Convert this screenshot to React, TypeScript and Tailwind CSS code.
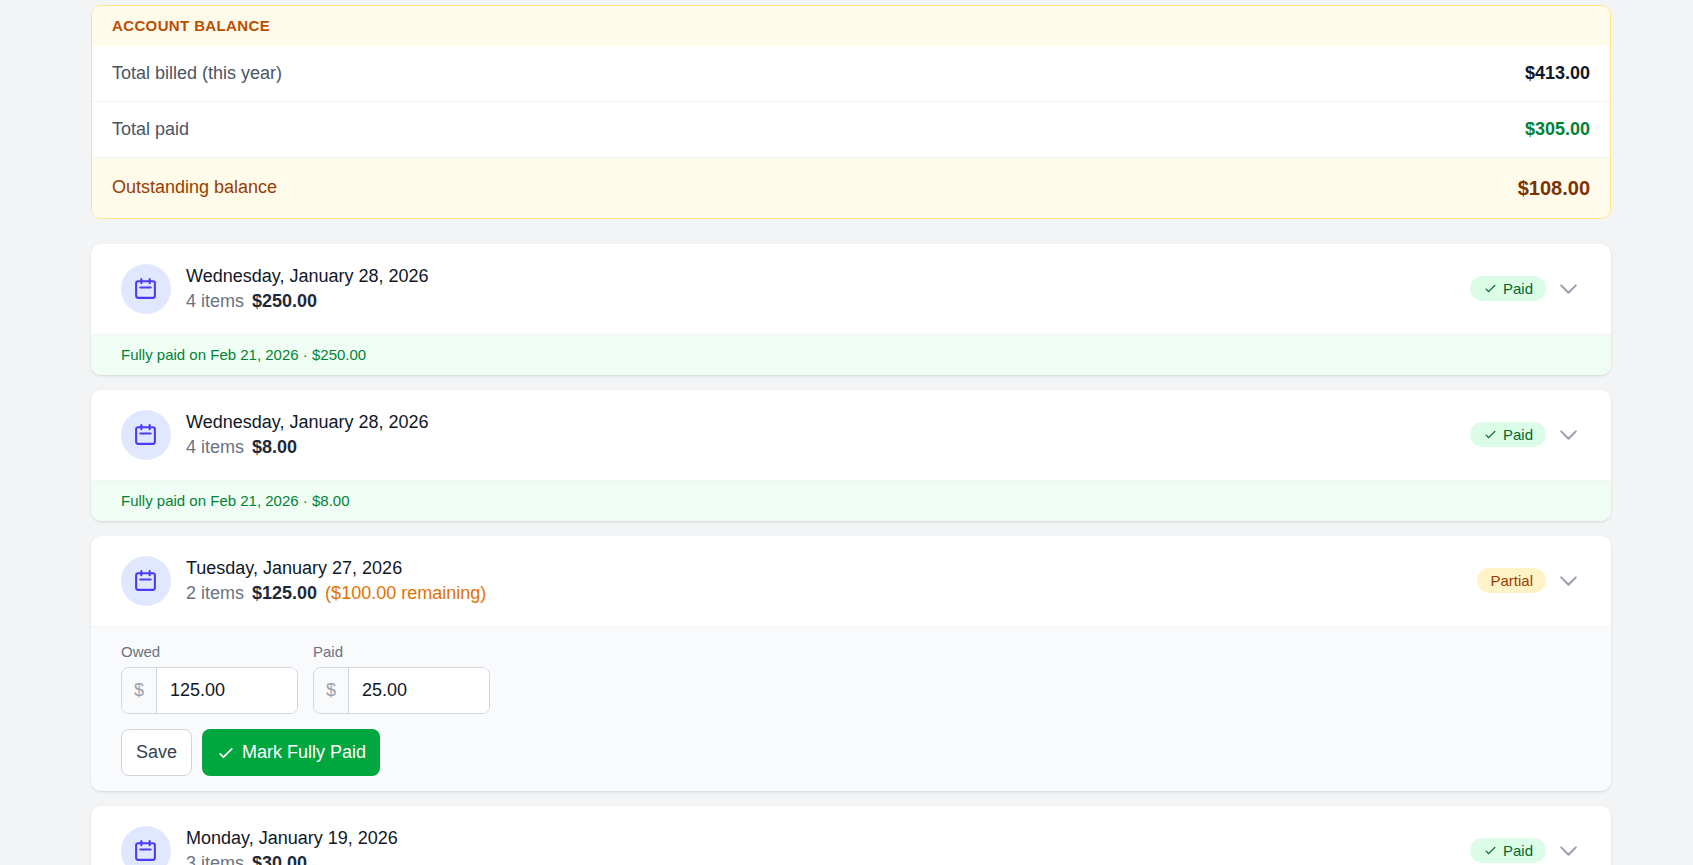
import { useState } from "react";

type Visit = {
  id: string;
  date: string;
  items: number;
  amount: string;
  status: "paid" | "partial";
  remaining?: string;
  paidOn?: string;
  paid?: string;
};

const visits: Visit[] = [
  { id: "v1", date: "Wednesday, January 28, 2026", items: 4, amount: "250.00", status: "paid", paidOn: "Feb 21, 2026" },
  { id: "v2", date: "Wednesday, January 28, 2026", items: 4, amount: "8.00", status: "paid", paidOn: "Feb 21, 2026" },
  { id: "v3", date: "Tuesday, January 27, 2026", items: 2, amount: "125.00", status: "partial", remaining: "100.00", paid: "25.00" },
  { id: "v4", date: "Monday, January 19, 2026", items: 3, amount: "30.00", status: "paid", paidOn: "Feb 21, 2026" },
];

function Icon({ d, className }: { d: string; className: string }) {
  return (
    <svg
      className={className}
      viewBox="0 0 24 24"
      fill="none"
      stroke="currentColor"
      strokeWidth="2"
      strokeLinecap="round"
      strokeLinejoin="round"
      aria-hidden="true"
    >
      <path d={d} />
    </svg>
  );
}

const CHECK = "M5 13l4 4L19 7";
const CHEVRON = "M19 9l-7 7-7-7";
const CALENDAR =
  "M8 7V3m8 4V3m-9 8h10M5 21h14a2 2 0 002-2V7a2 2 0 00-2-2H5a2 2 0 00-2 2v12a2 2 0 002 2z";

function Balance() {
  return (
    <section className="overflow-hidden rounded-[10px] border border-amber-200 bg-white">
      <h2 className="bg-amber-50 px-5 py-[10px] text-[15px] leading-5 font-semibold tracking-wide text-amber-700 uppercase">
        Account balance
      </h2>
      <dl>
        <div className="flex items-center justify-between border-b border-gray-100 px-5 py-[15px]">
          <dt className="text-gray-600">Total billed (this year)</dt>
          <dd className="font-semibold text-gray-900">$413.00</dd>
        </div>
        <div className="flex items-center justify-between border-b border-gray-100 px-5 py-[15px]">
          <dt className="text-gray-600">Total paid</dt>
          <dd className="font-semibold text-green-700">$305.00</dd>
        </div>
        <div className="flex items-start justify-between bg-amber-50 px-5 py-[15px]">
          <dt className="pt-[2px] font-medium text-amber-800">Outstanding balance</dt>
          <dd className="text-[20px] leading-[30px] font-bold text-amber-900">$108.00</dd>
        </div>
      </dl>
    </section>
  );
}

function MoneyField({ id, label, value }: { id: string; label: string; value: string }) {
  return (
    <div>
      <label htmlFor={id} className="mb-[5px] block text-[15px] leading-5 text-gray-500">
        {label}
      </label>
      <div className="flex h-[47px] overflow-hidden rounded-lg border border-gray-300 bg-white">
        <span className="flex items-center border-r border-gray-300 bg-gray-50 px-3 text-gray-400">$</span>
        <input
          id={id}
          defaultValue={value}
          inputMode="decimal"
          className="w-[140px] bg-white px-[13px] text-gray-900 outline-none"
        />
      </div>
    </div>
  );
}

function VisitCard({ visit }: { visit: Visit }) {
  const [open, setOpen] = useState(false);
  return (
    <article className="overflow-hidden rounded-[10px] bg-white shadow-sm">
      <button
        type="button"
        aria-expanded={open}
        onClick={() => setOpen(!open)}
        className="flex w-full items-start justify-between px-[30px] py-5 text-left"
      >
        <span className="flex items-center gap-[15px]">
          <span className="block size-[50px] rounded-full bg-indigo-100 p-3 text-indigo-600">
            <Icon d={CALENDAR} className="size-[25px]" />
          </span>
          <span className="block">
            <span className="block font-medium text-gray-900">{visit.date}</span>
            <span className="flex gap-2 text-gray-500">
              <span>{visit.items} items</span>
              <span className="font-semibold text-gray-800">${visit.amount}</span>
              {visit.remaining && <span className="text-amber-600">(${visit.remaining} remaining)</span>}
            </span>
          </span>
        </span>
        <span className="flex items-center gap-[10px] pt-3">
          {visit.status === "paid" ? (
            <span className="flex h-[25px] items-center gap-[5px] rounded-full bg-green-100 px-[13px] text-[15px] leading-5 font-medium text-green-800">
              <Icon d={CHECK} className="size-[15px]" />
              Paid
            </span>
          ) : (
            <span className="flex h-[25px] items-center rounded-full bg-amber-100 px-[13px] text-[15px] leading-5 font-medium text-amber-800">
              Partial
            </span>
          )}
          <Icon d={CHEVRON} className="size-[25px] text-gray-400" />
        </span>
      </button>

      {visit.status === "paid" ? (
        <p className="border-t border-gray-100 bg-green-50 px-[30px] py-[10px] text-[15px] leading-5 text-green-700">
          Fully paid on {visit.paidOn} · ${visit.amount}
        </p>
      ) : (
        <form
          onSubmit={(e) => e.preventDefault()}
          className="flex flex-col gap-[15px] border-t border-gray-100 bg-gray-50 px-[30px] py-[15px]"
        >
          <div className="flex flex-wrap gap-[15px]">
            <MoneyField id={`${visit.id}-owed`} label="Owed" value={visit.amount} />
            <MoneyField id={`${visit.id}-paid`} label="Paid" value={visit.paid ?? ""} />
          </div>
          <div className="flex flex-wrap gap-[10px]">
            <button
              type="submit"
              className="h-[47px] rounded-lg border border-gray-300 bg-white px-[14px] font-medium text-gray-700"
            >
              Save
            </button>
            <button
              type="button"
              className="flex h-[47px] items-center gap-[6px] rounded-lg bg-green-600 px-[14px] font-medium text-white"
            >
              <Icon d={CHECK} className="size-5" />
              Mark Fully Paid
            </button>
          </div>
        </form>
      )}
    </article>
  );
}

export default function App() {
  return (
    <main className="min-h-screen bg-gray-100 pt-[5px] pr-[82px] pb-10 pl-[91px] font-['Liberation_Sans',Arial,sans-serif] text-[18px] leading-[25px]">
      <Balance />
      <div className="mt-[25px] flex flex-col gap-[15px]">
        {visits.map((v) => (
          <VisitCard key={v.id} visit={v} />
        ))}
      </div>
    </main>
  );
}
